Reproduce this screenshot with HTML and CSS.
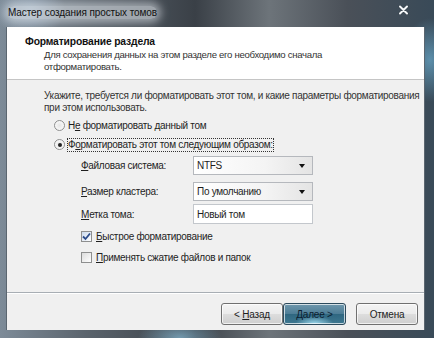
FILE: index.html
```html
<!DOCTYPE html>
<html lang="ru">
<head>
    <meta charset="UTF-8">
    <title>Мастер создания простых томов</title>
    <link rel="stylesheet" href="styles.css">
</head>
<body>
    <div class="window">
        <div class="titlebar">
            <span class="title">Мастер создания простых томов</span>
            <svg class="close" width="11" height="10" viewBox="0 0 11 10">
                <path d="M2 1.5 L9 8.5 M9 1.5 L2 8.5" stroke="#3a4650" stroke-width="3.6" stroke-linecap="round"/>
                <path d="M2 1.5 L9 8.5 M9 1.5 L2 8.5" stroke="#f4f6f8" stroke-width="2" stroke-linecap="round"/>
            </svg>
        </div>

        <div class="client">
            <div class="header">
                <div class="header-title">Форматирование раздела</div>
                <div class="header-desc">Для сохранения данных на этом разделе его необходимо сначала<br>отформатировать.</div>
            </div>

            <div class="content">
                <p class="intro">Укажите, требуется ли форматировать этот том, и какие параметры форматирования<br>при этом использовать.</p>

                <div class="option">
                    <span class="radio"></span>
                    <span>Н<u>е</u> форматировать данный том</span>
                </div>
                <div class="option">
                    <span class="radio checked"></span>
                    <span class="focused">Ф<u>о</u>рматировать этот том следующим образом:</span>
                </div>

                <div class="fields">
                    <div class="field">
                        <span class="field-label"><u>Ф</u>айловая система:</span>
                        <div class="combo">NTFS<span class="arrow"></span></div>
                    </div>
                    <div class="field">
                        <span class="field-label"><u>Р</u>азмер кластера:</span>
                        <div class="combo">По умолчанию<span class="arrow"></span></div>
                    </div>
                    <div class="field field-text">
                        <span class="field-label"><u>М</u>етка тома:</span>
                        <div class="textbox">Новый том</div>
                    </div>
                </div>

                <div class="check-row first">
                    <span class="check checked">
                        <svg width="9" height="9" viewBox="0 0 9 9"><path d="M1 4.5 L3.5 7 L8 1.5" fill="none" stroke="#2a4a8a" stroke-width="1.8"/></svg>
                    </span>
                    <span><u>Б</u>ыстрое форматирование</span>
                </div>
                <div class="check-row">
                    <span class="check"></span>
                    <span><u>П</u>рименять сжатие файлов и папок</span>
                </div>
            </div>

            <div class="footer">
                <button class="btn">&lt; <u>Н</u>азад</button>
                <button class="btn btn-default"><u>Д</u>алее &gt;</button>
                <button class="btn btn-cancel">Отмена</button>
            </div>
        </div>
    </div>
</body>
</html>
```

FILE: styles.css
```css
body {
    margin: 0;
    font-family: "Liberation Sans", Arial, sans-serif;
    font-size: 10px;
    letter-spacing: -0.3px;
    color: #1e1e1e;
}
.window {
    width: 434px;
    height: 338px;
    box-sizing: border-box;
    padding: 0 9px 8px 6px;
    display: flex;
    flex-direction: column;
    background:
        radial-gradient(ellipse 40px 60px at 430px 60px, rgba(120, 200, 240, 0.55), transparent 70%),
        radial-gradient(ellipse 60px 30px at 180px 338px, rgba(150, 210, 240, 0.6), transparent 70%),
        radial-gradient(ellipse 50px 40px at 30px 10px, rgba(160, 180, 200, 0.7), transparent 70%),
        linear-gradient(90deg, #7d8b98 0%, #5a636c 20%, #3a4047 45%, #6d747a 62%, #4a5058 80%, #394a58 100%);
}
.titlebar {
    height: 25px;
    display: flex;
    align-items: center;
    justify-content: space-between;
    padding: 0 16px 2px 2px;
}
.title {
    font-size: 10px;
    letter-spacing: -0.1px;
    color: #111;
    background: rgba(230, 235, 240, 0.55);
    box-shadow: 0 0 8px 4px rgba(230, 235, 240, 0.55);
    border-radius: 6px;
    line-height: 13px;
}
.close {
    margin-top: -5px;
}
.client {
    flex: 1;
    display: flex;
    flex-direction: column;
    background: #f0f0f0;
    border: 1px solid #5b6670;
    border-bottom: none;
    border-top: none;
}
.header {
    height: 53px;
    box-sizing: border-box;
    background: #fff;
    border-bottom: 1px solid #c5c5c5;
    padding: 8px 0 0 18px;
}
.header-title {
    font-weight: bold;
    font-size: 10.3px;
    letter-spacing: -0.15px;
    line-height: 14px;
    color: #111;
}
.header-desc {
    margin-left: 19px;
    font-size: 9.6px;
    line-height: 12px;
    color: #333;
}
.content {
    flex: 1;
    padding: 10px 0 0 37px;
}
.intro {
    margin: 0 0 2px;
    line-height: 12px;
    white-space: nowrap;
    color: #333;
}
.option {
    height: 19px;
    display: flex;
    align-items: center;
    padding-left: 10px;
}
.radio {
    width: 9px;
    height: 9px;
    border-radius: 50%;
    border: 1px solid #8e8f8f;
    background: radial-gradient(circle, #e6e6e6, #fff);
    margin-right: 3px;
    display: flex;
    align-items: center;
    justify-content: center;
}
.radio.checked::after {
    content: "";
    width: 4px;
    height: 4px;
    border-radius: 50%;
    background: #222;
}
.focused {
    outline: 1px dotted #333;
    line-height: 12px;
}
.fields {
    margin-top: 2px;
    padding-left: 37px;
}
.field {
    display: flex;
    align-items: center;
}
.field + .field {
    margin-top: 7px;
}
.field.field-text {
    margin-top: 3px;
}
.field-label {
    width: 112px;
}
.combo, .textbox {
    width: 120px;
    height: 19px;
    box-sizing: border-box;
    border: 1px solid #b5b8bd;
    display: flex;
    align-items: center;
    padding-left: 3px;
    position: relative;
}
.combo {
    background: linear-gradient(90deg, #fff 0%, #f4f4f4 60%, #e4e4e4 100%);
}
.textbox {
    height: 20px;
    background: #fff;
    border-color: #c3c7cc;
}
.arrow {
    position: absolute;
    right: 7px;
    top: 7px;
    border-left: 3.5px solid transparent;
    border-right: 3.5px solid transparent;
    border-top: 4px solid #111;
}
.check-row {
    height: 21px;
    display: flex;
    align-items: center;
    padding-left: 37px;
}
.check-row.first {
    margin-top: 2px;
}
.check {
    width: 9px;
    height: 9px;
    border: 1px solid #8e8f8f;
    background: linear-gradient(135deg, #dcdcdc, #fff);
    margin-right: 4px;
    display: flex;
    align-items: center;
    justify-content: center;
}
.check.checked {
    background: linear-gradient(135deg, #c9d8ec, #fff);
}
.footer {
    height: 38px;
    box-sizing: border-box;
    border-top: 1px solid #a8aeb4;
    box-shadow: inset 0 1px 0 #fff;
    display: flex;
    justify-content: flex-end;
    align-items: flex-start;
    padding: 10px 6px 0 0;
}
.btn {
    width: 62px;
    height: 22px;
    font-family: inherit;
    font-size: 10px;
    letter-spacing: -0.2px;
    color: #1e1e1e;
    border: 1px solid #707070;
    border-radius: 3px;
    background: linear-gradient(#f4f4f4 0%, #ebebeb 49%, #dddddd 50%, #cfcfcf 100%);
    box-shadow: inset 0 0 0 1px rgba(255, 255, 255, 0.7);
    padding: 0;
}
.btn-default {
    width: 63px;
    color: #0c2030;
    border-color: #2c4a5c;
    background:
        radial-gradient(ellipse 24px 10px at 50% 100%, rgba(170, 230, 250, 0.9), transparent 80%),
        linear-gradient(#6f98ad 0%, #4d7d96 49%, #2f6680 50%, #3e7891 100%);
}
.btn-cancel {
    margin-left: 10px;
}
```
